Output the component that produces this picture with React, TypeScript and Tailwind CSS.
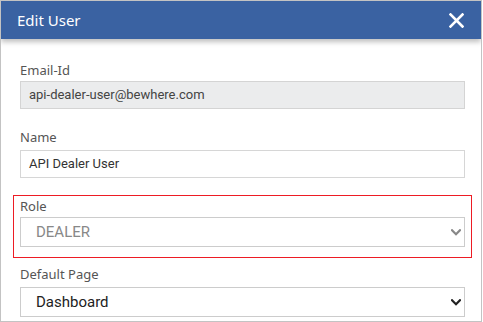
import React from "react";

const labelCls =
  "block h-4 text-[13px] leading-4 text-[#555] font-['Noto_Sans',sans-serif]";

function Chevron({ color }: { color: string }) {
  return (
    <svg width="10" height="7" viewBox="0 0 10 7" className="shrink-0">
      <path
        d="M1 1.2 L5 5.2 L9 1.2"
        fill="none"
        stroke={color}
        strokeWidth="2.2"
        strokeLinecap="square"
      />
    </svg>
  );
}

export default function App() {
  return (
    <div className="h-[322px] w-[482px] overflow-hidden border border-[#c3c3c3] bg-white">
      <header className="relative z-10 flex h-[38px] items-center justify-between bg-[#3a62a2] pl-4 pr-[17px] shadow-[0_3px_5px_rgba(0,0,0,0.25)]">
        <h1 className="text-[15px] leading-none text-white font-['Noto_Sans',sans-serif]">
          Edit User
        </h1>
        <button className="flex h-4 w-4 items-center justify-center">
          <svg width="15" height="15" viewBox="0 0 15 15">
            <path
              d="M1.5 1.5 L13.5 13.5 M13.5 1.5 L1.5 13.5"
              stroke="white"
              strokeWidth="2.6"
              strokeLinecap="square"
            />
          </svg>
        </button>
      </header>

      <div className="pl-[19px] pr-4 pt-[23px] font-['Roboto',sans-serif]">
        <label className={labelCls}>Email-Id</label>
        <div className="mt-[3px] flex h-[28px] items-center border border-[#d4d4d4] bg-[#ebeced] px-2 text-[13px] text-[#444]">
          api-dealer-user@bewhere.com
        </div>

        <label className={`${labelCls} mt-5`}>Name</label>
        <div className="mt-[5px] flex h-[28px] items-center border border-[#d6d6d6] bg-white px-2 text-[13px] text-[#333]">
          API Dealer User
        </div>

        {/* highlighted role field */}
        <div className="ml-[-7px] mt-[17px] w-[459px] border border-[#ed1c24] px-[6px] pb-[10px] pt-[2px]">
          <label className={labelCls}>Role</label>
          <div className="mt-[3px] flex h-[30px] items-center justify-between border border-[#cccccc] bg-white pl-[15px] pr-[3px] text-[15px] text-[#888]">
            <span>DEALER</span>
            <Chevron color="#888" />
          </div>
        </div>

        <label className={`${labelCls} mt-2`}>Default Page</label>
        <div className="mt-[5px] flex h-[30px] items-center justify-between border border-[#cccccc] bg-white pl-[15px] pr-[3px] text-[15px] text-[#222]">
          <span>Dashboard</span>
          <Chevron color="#222" />
        </div>
      </div>
    </div>
  );
}
